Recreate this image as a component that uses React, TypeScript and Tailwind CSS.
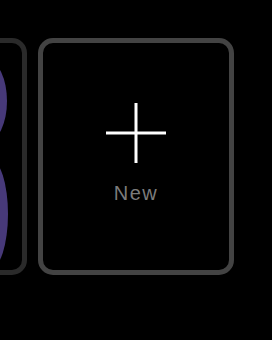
import { JSX } from 'react'

const PlusIcon = (): JSX.Element => (
  <svg width="60" height="60" viewBox="0 0 60 60" fill="none">
    <rect x="28.5" y="0" width="3" height="60" fill="#ffffff" />
    <rect x="0" y="28.5" width="60" height="3" fill="#ffffff" />
  </svg>
)

// right edge of the previous face's purple numeral
const FaceArt = (): JSX.Element => (
  <svg className="absolute right-0 top-0" width="22" height="227" viewBox="0 0 22 227" fill="none">
    <ellipse cx="-12" cy="58" rx="19" ry="40" fill="#473979" />
    <ellipse cx="-10" cy="171" rx="18" ry="55" fill="#473979" />
  </svg>
)

export default function App(): JSX.Element {
  return (
    <div className="w-[272px] h-[340px] bg-black overflow-hidden">
      <div className="flex gap-[11px] pt-[38px]">
        <div className="relative shrink-0 ml-[-169px] w-[196px] h-[237px] rounded-[15px] border-[5px] border-[#2a2a2a] overflow-hidden">
          <FaceArt />
        </div>
        <div className="shrink-0 w-[196px] h-[237px] rounded-[15px] border-[5px] border-[#434343] flex flex-col items-center pt-[60px]">
          <PlusIcon />
          <span
            className="mt-[20px] text-[20px] leading-none tracking-[1.5px] text-[#7c7c7c]"
            style={{ fontFamily: '"Liberation Sans", Arial, sans-serif' }}
          >
            New
          </span>
        </div>
      </div>
    </div>
  )
}
